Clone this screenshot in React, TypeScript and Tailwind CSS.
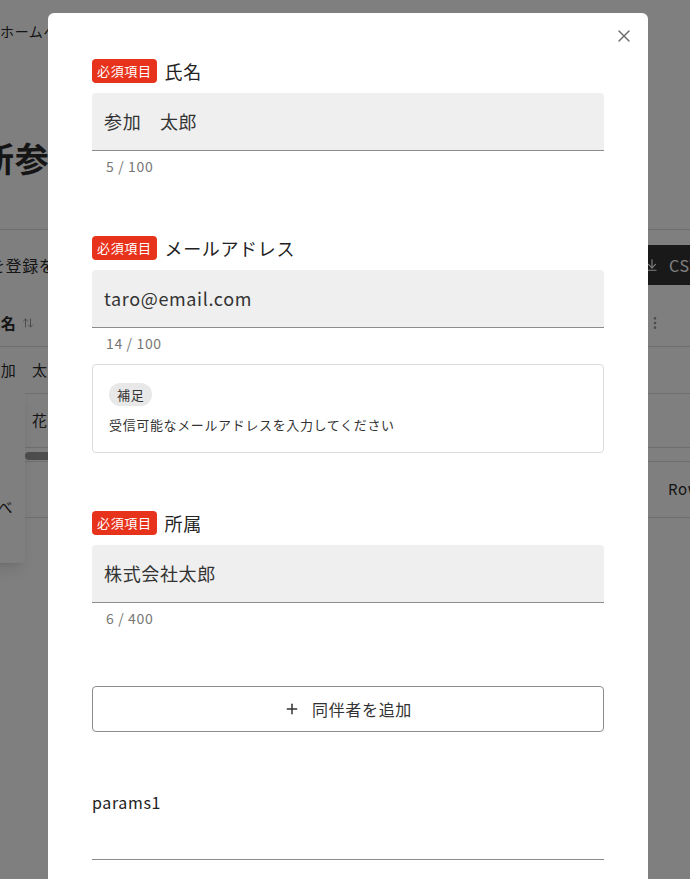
import { ArrowDownToLine, ArrowUpDown, EllipsisVertical, Plus, X } from "lucide-react";

function RequiredField({ label, value, count }: { label: string; value: string; count: string }) {
  return (
    <div>
      <div className="flex items-center gap-[8px]">
        <span className="h-[24px] rounded-[4px] bg-[#e8331c] px-[5px] text-[13px] leading-[24px] text-white">
          必須項目
        </span>
        <span className="text-[18px] leading-[24px] text-[#222]">{label}</span>
      </div>
      <div className="mt-[10px] flex h-[58px] items-center rounded-t-[4px] border-b border-[#8c8c8c] bg-[#efefef] px-[12px] text-[18px] text-[#333]">
        {value}
      </div>
      <div className="mt-[5px] px-[14px] text-[14px] leading-[20px] text-[#777]">{count}</div>
    </div>
  );
}

function BackgroundPage() {
  return (
    <div className="-ml-[20px] w-[740px] whitespace-nowrap text-[#2a2a2a]">
      <div className="h-[64px] pl-[20px] pt-[20px] text-[14px] leading-[22px]">ホームへ戻る</div>
      <div className="h-[166px] border-b border-[#dddddd] pt-[74px]">
        <h1 className="text-[34px] font-bold leading-[40px]">新参加者登録</h1>
      </div>
      <div className="flex h-[70px] items-center">
        <div className="w-[651px] shrink-0 text-[16px]">
          <span className="-ml-[41px]">参加者を登録をする場合はこちら</span>
        </div>
        <div className="flex h-[40px] shrink-0 items-center gap-[10px] bg-[#333] pl-[14px] pr-[14px] text-[16px] text-white">
          <ArrowDownToLine size={14} strokeWidth={2} />
          <span>CSVダウンロード</span>
        </div>
      </div>
      <div className="flex h-[47px] items-center border-b border-[#dddddd] pl-[5px] text-[15px] font-bold">
        <span>氏名</span>
        <ArrowUpDown size={12} className="ml-[6px] text-[#999]" />
        <div className="ml-auto mr-[57px] flex items-center gap-[14px] text-[#999]">
          <span className="text-[18px] font-normal">=</span>
          <EllipsisVertical size={16} />
        </div>
      </div>
      <div className="flex h-[47px] items-center border-b border-[#dddddd] pl-[5px] text-[15px]">参加　太郎</div>
      <div className="flex h-[54px] items-center border-b border-[#dddddd] pl-[5px] text-[15px]">参加　花子</div>
      <div className="h-[13px] pt-[4px]">
        <div className="ml-[45px] h-[8px] w-[300px] rounded-full bg-[#9a9a9a]" />
      </div>
      <div className="flex h-[57px] items-center border-y border-[#dddddd] pl-[688px] text-[15px]">
        Rows per page:
      </div>
    </div>
  );
}

export default function App() {
  return (
    <div className="relative h-[879px] w-[690px] overflow-hidden bg-white font-['Noto_Sans_CJK_JP','Noto_Sans',sans-serif] tracking-[0.04em]">
      <BackgroundPage />

      <div className="absolute left-[-128px] top-[388px] flex h-[175px] w-[153px] flex-col gap-[22px] whitespace-nowrap rounded-[4px] bg-white px-[16px] pt-[20px] text-[15px] leading-[22px] text-[#2a2a2a] shadow-lg">
        <span>昇順</span>
        <span>降順</span>
        <span>表示する列を並べ</span>
      </div>

      <div className="absolute inset-0 bg-black/50" />

      <div className="absolute left-[48px] top-[13px] w-[600px] rounded-[6px] bg-white px-[44px] pb-[40px] pt-[46px]">
        <button className="absolute right-[14px] top-[13px] text-[#6b6b6b]">
          <X size={20} strokeWidth={1.75} />
        </button>

        <RequiredField label="氏名" value="参加　太郎" count="5 / 100" />

        <div className="mt-[60px]">
          <RequiredField label="メールアドレス" value="taro@email.com" count="14 / 100" />
          <div className="mt-[11px] rounded-[4px] border border-[#dcdcdc] px-[16px] pb-[17px] pt-[16px]">
            <span className="inline-block h-[23px] rounded-full bg-[#e8e8e8] px-[8px] text-[13px] leading-[23px] text-[#333]">
              補足
            </span>
            <p className="mt-[9px] text-[13px] leading-[20px] text-[#333]">
              受信可能なメールアドレスを入力してください
            </p>
          </div>
        </div>

        <div className="mt-[58px]">
          <RequiredField label="所属" value="株式会社太郎" count="6 / 400" />
        </div>

        <button className="mt-[58px] flex h-[46px] w-full items-center justify-center gap-[12px] rounded-[4px] border border-[#8c8c8c] text-[16px] text-[#333]">
          <Plus size={16} strokeWidth={2.25} />
          <span>同伴者を追加</span>
        </button>

        <div className="mt-[58px] text-[16px] leading-[24px] text-[#222]">params1</div>
        <div className="h-[46px] border-b border-[#8c8c8c]" />
        <div className="h-[40px]" />
      </div>
    </div>
  );
}
